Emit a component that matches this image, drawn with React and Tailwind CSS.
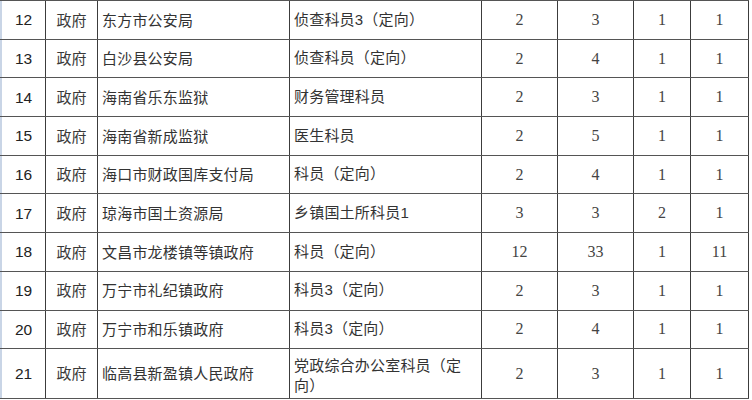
const rows = [
  ["12", "东方市公安局", "侦查科员3（定向）", "2", "3", "1", "1"],
  ["13", "白沙县公安局", "侦查科员（定向）", "2", "4", "1", "1"],
  ["14", "海南省乐东监狱", "财务管理科员", "2", "3", "1", "1"],
  ["15", "海南省新成监狱", "医生科员", "2", "5", "1", "1"],
  ["16", "海口市财政国库支付局", "科员（定向）", "2", "4", "1", "1"],
  ["17", "琼海市国土资源局", "乡镇国土所科员1", "3", "3", "2", "1"],
  ["18", "文昌市龙楼镇等镇政府", "科员（定向）", "12", "33", "1", "11"],
  ["19", "万宁市礼纪镇政府", "科员3（定向）", "2", "3", "1", "1"],
  ["20", "万宁市和乐镇政府", "科员3（定向）", "2", "4", "1", "1"],
  ["21", "临高县新盈镇人民政府", ["党政综合办公室科员（定", "向）"], "2", "3", "1", "1"],
]

const Cell = ({ children, className = "" }) => (
  <div className={`flex items-center border-r border-[#3c3c3c] ${className}`}>{children}</div>
)

const Row = ({ row, last }) => {
  const [no, org, job, a, b, c, d] = row
  return (
    <div
      className={`grid grid-cols-[46px_52px_192px_192px_76px_76px_57px_58px] border-b border-[#555] ${
        last ? "h-[50px]" : "h-[38.7px]"
      }`}
    >
      <Cell className="justify-center border-l-2 border-l-[#c9d5e6] text-[15.5px] text-[#222] font-['Liberation_Sans',sans-serif]">
        {no}
      </Cell>
      <Cell className="justify-center text-[15px] text-[#3a3a3a] font-['Noto_Sans_CJK_SC',sans-serif]">
        政府
      </Cell>
      <Cell className="pl-1 text-[15px] text-[#333] tracking-[0.2px] font-['Noto_Sans_CJK_SC',sans-serif]">
        {org}
      </Cell>
      <Cell className="pl-1 text-[15px] text-[#333] tracking-[0.2px] font-['Liberation_Sans','Noto_Sans_CJK_SC',sans-serif]">
        {Array.isArray(job) ? (
          <div className="leading-[20px] pt-1">
            {job[0]}
            <br />
            {job[1]}
          </div>
        ) : (
          job
        )}
      </Cell>
      {[a, b, c, d].map((v, i) => (
        <Cell key={i} className="justify-center text-[16px] text-[#444] font-['Liberation_Serif',serif]">
          {v}
        </Cell>
      ))}
    </div>
  )
}

export default function App() {
  return (
    <div className="w-[752px] h-[400px] overflow-hidden bg-white">
      <div className="w-[749px] border-t border-[#555]">
        {rows.map((r, i) => (
          <Row key={r[0]} row={r} last={i === rows.length - 1} />
        ))}
      </div>
    </div>
  )
}
